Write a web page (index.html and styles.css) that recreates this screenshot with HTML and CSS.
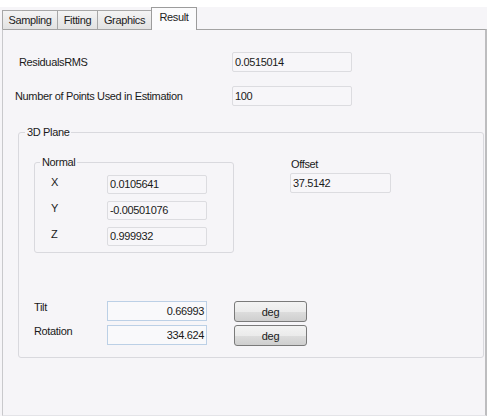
FILE: index.html
```html
<!DOCTYPE html>
<html lang="en">
<head>
    <meta charset="UTF-8">
    <title>Plane Fit Result</title>
    <link rel="stylesheet" href="styles.css">
</head>
<body>
    <div class="window">
        <div class="tabs">
            <div class="tab tab-sampling">Sampling</div>
            <div class="tab tab-fitting">Fitting</div>
            <div class="tab tab-graphics">Graphics</div>
            <div class="tab tab-result active">Result</div>
        </div>

        <div class="page">
            <div class="row row-rms">
                <span class="label">ResidualsRMS</span>
                <div class="field wide">0.0515014</div>
            </div>
            <div class="row row-points">
                <span class="label">Number of Points Used in Estimation</span>
                <div class="field wide">100</div>
            </div>

            <div class="group plane">
                <div class="group-title">3D Plane</div>

                <div class="plane-top">
                    <div class="group normal">
                        <div class="group-title">Normal</div>
                        <div class="axes">
                            <div class="axis-row">
                                <span class="axis">X</span>
                                <div class="field small">0.0105641</div>
                            </div>
                            <div class="axis-row">
                                <span class="axis">Y</span>
                                <div class="field small">-0.00501076</div>
                            </div>
                            <div class="axis-row">
                                <span class="axis">Z</span>
                                <div class="field small">0.999932</div>
                            </div>
                        </div>
                    </div>

                    <div class="offset">
                        <div class="offset-label">Offset</div>
                        <div class="field offset-field">37.5142</div>
                    </div>
                </div>

                <div class="angles">
                    <div class="angle-row">
                        <span class="angle-label">Tilt</span>
                        <div class="field num">0.66993</div>
                        <button class="deg">deg</button>
                    </div>
                    <div class="angle-row">
                        <span class="angle-label">Rotation</span>
                        <div class="field num">334.624</div>
                        <button class="deg">deg</button>
                    </div>
                </div>
            </div>
        </div>
    </div>
</body>
</html>
```

FILE: styles.css
```css
html, body {
    margin: 0;
    background-color: #fff;
}
body {
    font-family: "Liberation Sans", Arial, sans-serif;
    font-size: 11px;
    letter-spacing: -0.35px;
    color: #1a1a1a;
}
.window {
    width: 487px;
    height: 409px;
    margin-top: 7px;
    background-color: #f6f5f8;
}

/* tab strip */
.tabs {
    display: flex;
    align-items: flex-end;
    height: 22px;
    padding-left: 2px;
}
.tab {
    box-sizing: border-box;
    height: 19px;
    line-height: 18px;
    text-align: center;
    border: 1px solid #a7a7a7;
    border-bottom: none;
    margin-right: -1px;
    background: linear-gradient(#f4f4f4, #e2e2e2);
    color: #222;
}
.tab-sampling { width: 56px; }
.tab-fitting { width: 41px; }
.tab-graphics { width: 55px; }
.tab-result { width: 46px; }
.tab.active {
    height: 23px;
    line-height: 19px;
    margin-bottom: -1px;
    background: #fbfbfc;
    border-color: #9c9c9c;
    position: relative;
    z-index: 1;
}

/* page body */
.page {
    box-sizing: border-box;
    height: 387px;
    margin-left: 2px;
    width: 485px;
    border-top: 1px solid #a3a3a3;
    border-left: 1px solid #c9c9cc;
    border-right: 2px solid #bdbdbf;
    border-bottom: 1px solid #e4e4e8;
    padding-top: 22px;
}
.row {
    display: flex;
    align-items: center;
    height: 20px;
}
.row-points {
    margin-top: 14px;
}
.label {
    box-sizing: border-box;
    width: 229px;
}
.row-rms .label { padding-left: 16px; }
.row-points .label { padding-left: 12px; }

.field {
    box-sizing: border-box;
    height: 20px;
    line-height: 18px;
    padding: 0 2px;
    border: 1px solid #dcdce0;
    border-radius: 2px;
    background-color: #f7f6f9;
    white-space: nowrap;
}
.field.wide { width: 120px; }
.field.small { width: 100px; height: 19px; line-height: 17px; }
.offset-field { width: 101px; }
.field.num {
    width: 100px;
    text-align: right;
    border-color: #bcd0e6;
    background-color: #f9f9fb;
    border-radius: 0;
}

/* group boxes */
.group {
    box-sizing: border-box;
    border: 1px solid #d9d9de;
    border-radius: 3px;
}
.group-title {
    width: fit-content;
    margin-top: -7px;
    margin-left: 6px;
    padding: 0 2px;
    line-height: 13px;
    background-color: #f6f5f8;
}
.plane {
    width: 466px;
    margin: 26px 0 0 15px;
    padding-bottom: 11px;
}
.plane-top {
    display: flex;
    align-items: flex-start;
    margin: 19px 0 0 15px;
}
.normal {
    width: 200px;
    height: 91px;
    margin-top: 4px;
}
.normal .group-title {
    margin-left: 5px;
}
.axes {
    display: flex;
    flex-direction: column;
    gap: 7px;
    margin-top: 6px;
}
.axis-row {
    display: flex;
    align-items: flex-start;
}
.axis {
    box-sizing: border-box;
    width: 72px;
    padding-left: 16px;
    line-height: 15px;
}
.offset {
    margin-left: 56px;
}
.offset-label {
    padding-left: 1px;
    line-height: 13px;
    margin-bottom: 2px;
}

/* tilt / rotation */
.angles {
    display: flex;
    flex-direction: column;
    gap: 3px;
    margin: 48px 0 0 15px;
}
.angle-row {
    display: flex;
    align-items: flex-start;
}
.angle-label {
    width: 73px;
    line-height: 13px;
}
.deg {
    box-sizing: border-box;
    width: 73px;
    height: 21px;
    margin-left: 27px;
    padding: 0;
    font-family: inherit;
    font-size: 11px;
    letter-spacing: inherit;
    color: #1a1a1a;
    border: 1px solid #7a7a7a;
    border-radius: 3px;
    background: linear-gradient(#f3f3f3 0%, #ebebeb 50%, #dddddd 51%, #cfcfcf 100%);
}
```
